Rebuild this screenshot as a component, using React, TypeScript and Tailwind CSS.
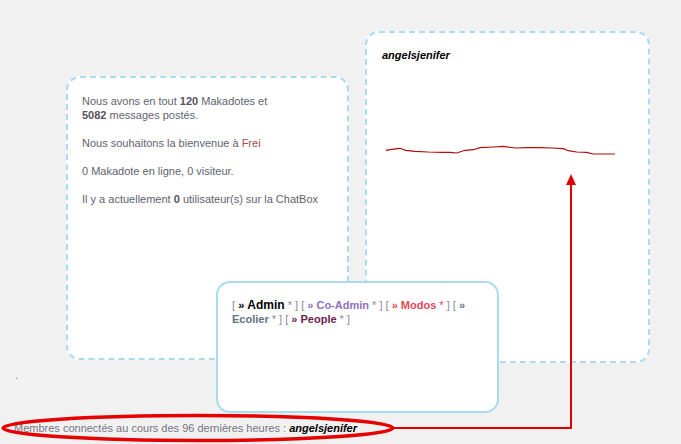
const wave: [number, number][] = [
  [386, 150.3], [391.7, 149.3], [400, 148.3], [405.7, 150.3], [415, 151.3],
  [428.3, 152], [441.7, 152.3], [450, 152.3], [456.7, 153], [465, 150.3],
  [473.3, 149.7], [480, 147.7], [493.3, 147], [503.3, 146.3], [515, 148],
  [528.3, 147.7], [540, 147.7], [551.7, 148], [563.3, 148.7], [568.3, 150.7],
  [576.7, 152], [586.7, 152.3], [593.3, 154], [615, 154],
];

function StatsCard() {
  return (
    <div className="absolute left-[66px] top-[76px] h-[284px] w-[283px] rounded-[14px] border-2 border-dashed border-[#a9dcf1] bg-white px-[14px] pt-[16px] text-[11px] leading-[14px] text-[#62626f]">
      <p className="mb-[14px]">
        Nous avons en tout <b className="text-[#555560]">120</b> Makadotes et
        <br />
        <b className="text-[#555560]">5082</b> messages postés.
      </p>
      <p className="mb-[14px]">
        Nous souhaitons la bienvenue à <span className="text-[#a94848]">Frei</span>
      </p>
      <p className="mb-[14px]">0 Makadote en ligne, 0 visiteur.</p>
      <p>
        Il y a actuellement <b className="text-[#555560]">0</b> utilisateur(s) sur la ChatBox
      </p>
    </div>
  );
}

function LastUserCard() {
  return (
    <div className="absolute left-[365px] top-[31px] h-[332px] w-[285px] rounded-[14px] border-2 border-dashed border-[#a9dcf1] bg-white px-[15px] pt-[15px] text-[11px] leading-[14px]">
      <b className="italic text-black">angelsjenifer</b>
    </div>
  );
}

function LegendCard() {
  const br = "text-[#8a8a96]";
  return (
    <div className="absolute left-[216px] top-[281px] h-[132px] w-[283px] rounded-[14px] border-2 border-[#a9dcf1] bg-white px-[14px] pt-[15px] text-[11px] leading-[14px]">
      <span className={br}>[ </span>
      <b className="text-black">
        » <span className="text-[12px]">Admin</span>
      </b>
      <span className={br}> * ] [ </span>
      <b className="text-[#9070c0]">» Co-Admin</b>
      <span className={br}> * ] [ </span>
      <b className="text-[#e0485a]">» Modos</b>
      <span className="text-[#e0485a]"> *</span>
      <span className={br}> ] [ </span>
      <b className="text-[#5f7484]">»</b>
      <br />
      <b className="text-[#5f7484]">Ecolier</b>
      <span className={br}> * ] [ </span>
      <b className="text-[#6a2350]">» People</b>
      <span className={br}> * ]</span>
    </div>
  );
}

export default function App() {
  return (
    <div
      className="relative h-[444px] w-[681px] overflow-hidden bg-[#f1f1f1]"
      style={{ fontFamily: '"Liberation Sans", Arial, sans-serif' }}
    >
      <StatsCard />
      <LastUserCard />
      <LegendCard />

      <span className="absolute left-[15px] top-[368px] text-[11px] leading-[14px] text-[#777]">.</span>

      <div className="absolute left-[14px] top-[421px] text-[11px] leading-[14px] text-[#767684]">
        Membres connectés au cours des 96 dernières heures :{" "}
        <b className="italic text-black">angelsjenifer</b>
      </div>

      <svg className="pointer-events-none absolute left-0 top-0" width="681" height="444" viewBox="0 0 681 444">
        <polyline
          points={wave.map(([x, y]) => `${x},${y}`).join(" ")}
          fill="none"
          stroke="#b40a0a"
          strokeWidth="1.2"
        />
        <ellipse cx="198" cy="428" rx="195" ry="12.5" fill="none" stroke="#e60000" strokeWidth="3.5" />
        <polyline points="393,428 571,428 571,182" fill="none" stroke="#e00000" strokeWidth="2" />
        <polygon points="571,174 566,185 576,185" fill="#e00000" />
      </svg>
    </div>
  );
}
